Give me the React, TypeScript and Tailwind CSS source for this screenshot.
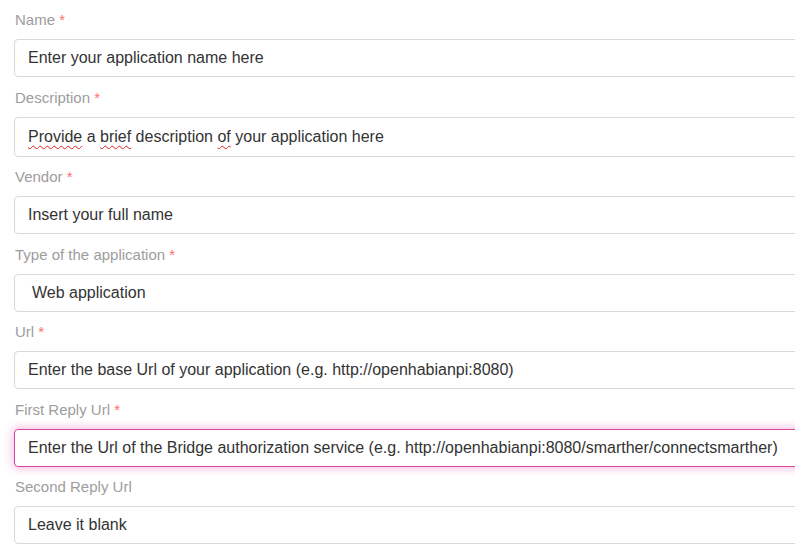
import React from 'react';

type Field = {
  label: string;
  required?: boolean;
  value: React.ReactNode;
  focused?: boolean;
  select?: boolean;
  tall?: boolean;
};

const squiggle = 'underline decoration-wavy decoration-[#e02020] decoration-1 underline-offset-[3px]';

const fields: Field[] = [
  { label: 'Name', required: true, value: 'Enter your application name here' },
  {
    label: 'Description',
    required: true,
    tall: true,
    value: (
      <>
        <span className={squiggle}>Provide</span> a <span className={squiggle}>brief</span> description{' '}
        <span className={squiggle}>of</span> your application here
      </>
    ),
  },
  { label: 'Vendor', required: true, value: 'Insert your full name' },
  { label: 'Type of the application', required: true, value: 'Web application', select: true },
  { label: 'Url', required: true, value: 'Enter the base Url of your application (e.g. http://openhabianpi:8080)' },
  {
    label: 'First Reply Url',
    required: true,
    focused: true,
    value: 'Enter the Url of the Bridge authorization service (e.g. http://openhabianpi:8080/smarther/connectsmarther)',
  },
  { label: 'Second Reply Url', value: 'Leave it blank' },
];

export default function App() {
  return (
    <div className="w-[795px] h-[554px] overflow-hidden bg-white pl-[14px] pt-[10px] font-['Liberation_Sans',Arial,sans-serif]">
      {fields.map((f) => (
        <div key={f.label} className="mb-[10.5px]">
          <div className="h-[20px] leading-[20px] text-[15px] text-[#9d9d9d] pl-[1px] mb-[9px]">
            {f.label}
            {f.required && <span className="text-[#ff6f6f]"> *</span>}
          </div>
          <div
            className={
              'w-[830px] flex items-center rounded-[4px] border bg-white text-[16px] text-[#333] whitespace-nowrap ' +
              (f.tall ? 'h-[40px] ' : 'h-[38px] ') +
              (f.select ? 'pl-[17px] ' : 'pl-[13px] ') +
              (f.focused
                ? 'border-[#d9469f] shadow-[0_0_8px_2px_rgba(235,120,195,0.45)]'
                : 'border-[#d9d9d9]')
            }
          >
            <span>{f.value}</span>
          </div>
        </div>
      ))}
    </div>
  );
}
